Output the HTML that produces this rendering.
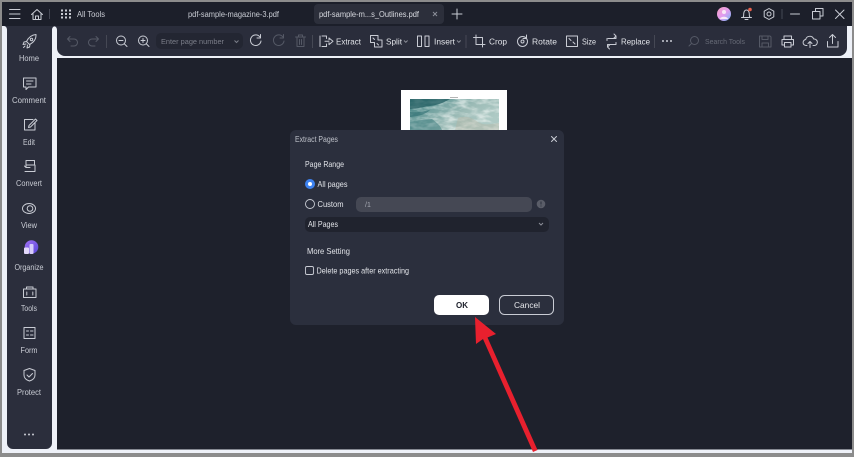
<!DOCTYPE html>
<html>
<head>
<meta charset="utf-8">
<style>
html,body{margin:0;padding:0;width:854px;height:457px;overflow:hidden;background:#8c8c8c}
svg{display:block;filter:blur(.35px)}
text{font-family:"Liberation Sans",sans-serif}
.s{fill:#c9ccd4;font-size:8px}
.t{fill:#d8dae0;font-size:8px}
.d{fill:#e2e4e9;font-size:8.300px}
.i{fill:none;stroke:#c9ccd4;stroke-width:1;stroke-linecap:round;stroke-linejoin:round}
.o{fill:none;stroke:#555966;stroke-width:1;stroke-linecap:round;stroke-linejoin:round}
</style>
</head>
<body>
<svg width="854" height="457" viewBox="0 0 854 457" xmlns="http://www.w3.org/2000/svg">
<defs>
<linearGradient id="sea" x1="0" y1="0" x2="1" y2="0.5">
<stop offset="0" stop-color="#3f8082"/><stop offset="0.35" stop-color="#74a3a1"/><stop offset="0.65" stop-color="#9dbcb7"/><stop offset="1" stop-color="#aecac5"/>
</linearGradient>
<linearGradient id="ava" x1="0" y1="0" x2="1" y2="1">
<stop offset="0" stop-color="#f5a0c0"/><stop offset="0.5" stop-color="#e39cf0"/><stop offset="1" stop-color="#70b8f5"/>
</linearGradient>
<linearGradient id="org" x1="0" y1="0" x2="1" y2="1">
<stop offset="0" stop-color="#a070f5"/><stop offset="1" stop-color="#5a48d8"/>
</linearGradient>
<filter id="foam" x="0" y="0" width="100%" height="100%">
<feTurbulence type="fractalNoise" baseFrequency=".09 .22" numOctaves="3" seed="7"/>
<feColorMatrix type="matrix" values="0 0 0 0 .9  0 0 0 0 .94  0 0 0 0 .92  2.600 0 0 0 -1"/>
</filter>
</defs>
<rect width="854" height="457" fill="#8c8c8c"/>
<rect x="2" y="2" width="850" height="451" fill="#eef1f8"/>
<rect x="2" y="2" width="850" height="24" fill="#1c1f2a"/>

<!-- title bar -->
<g class="i">
<path d="M9.500 9.500h10.500M9.500 14h10.500M9.500 18.500h10.500"/>
<path d="M31.500 14.500l5.500-5 5.500 5M33 13.500v6h8v-6M35.500 19.500v-3.500h3v3.500"/>
</g>
<path d="M49.500 9v10" stroke="#454854"/>
<g fill="#c9ccd4">
<rect x="61" y="9.500" width="2" height="2"/><rect x="65" y="9.500" width="2" height="2"/><rect x="69" y="9.500" width="2" height="2"/>
<rect x="61" y="13" width="2" height="2"/><rect x="65" y="13" width="2" height="2"/><rect x="69" y="13" width="2" height="2"/>
<rect x="61" y="16.500" width="2" height="2"/><rect x="65" y="16.500" width="2" height="2"/><rect x="69" y="16.500" width="2" height="2"/>
</g>
<text x="77" y="17" class="s" textLength="28" lengthAdjust="spacingAndGlyphs">All Tools</text>
<text x="188" y="17" class="s" textLength="91" lengthAdjust="spacingAndGlyphs">pdf-sample-magazine-3.pdf</text>
<rect x="314" y="4" width="130" height="20" rx="4" fill="#2c2f3b"/>
<text x="319" y="17" class="t" textLength="100" lengthAdjust="spacingAndGlyphs">pdf-sample-m...s_Outlines.pdf</text>
<path d="M433 12l4 4M437 12l-4 4" fill="none" stroke="#8b8e98"/>
<path d="M452 14h10M457 9v10" class="i"/>
<circle cx="724" cy="14" r="7" fill="url(#ava)"/>
<circle cx="724" cy="12" r="2" fill="#f8e8f8"/>
<path d="M720 19c.5-3 7.500-3 8 0" fill="#f8e8f8"/>
<path d="M741.500 17.500h10M743 17.500c1-1 .5-3 .8-4.500.4-2 1.500-3 2.700-3s2.300 1 2.700 3c.3 1.500-.2 3.500.8 4.500M745 19.500h3" class="i"/>
<circle cx="750" cy="9.500" r="1.800" fill="#e8604c"/>
<path d="M769 8.500l4.800 2.700v5.600l-4.800 2.700-4.800-2.700v-5.600z" class="i"/>
<circle cx="769" cy="14" r="2" class="i"/>
<path d="M782 9v10" stroke="#454854"/>
<path d="M790.500 14h9" class="i"/>
<path d="M812.500 11.500h7.500v7.500h-7.500zM815.500 11.500v-3h7.500v7.500h-3" class="i"/>
<path d="M835.500 10l8.500 8.500M844 10l-8.500 8.500" class="i"/>

<!-- sidebar -->
<path d="M4 26h52c-3 0-4 2-4 4v413a6 6 0 0 1-6 6h-33a6 6 0 0 1-6-6v-413c0-2-1-4-3-4z" fill="#2b2e3c"/>
<rect x="57" y="58" width="795" height="391.500" fill="#1e212c"/>
<!-- toolbar -->
<path d="M53 26h794v22a8 8 0 0 1-8 8h-774a8 8 0 0 1-8-8v-18c0-2-1-4-4-4z" fill="#2a2d3b"/>

<!-- sidebar icons -->
<g class="i">
<path d="M36 34.500c-4 .3-7.500 3-9.500 7l3 3c4-2 6.700-5.500 6.500-10zM26.500 41.500l-2.500.5-1 2.500 3-.5M30 44.500l-.5 2.500-2.500 1 .5-3M25 46l-1.500 1.500"/>
<circle cx="31.500" cy="39.500" r="1.200"/>
<path d="M23.500 78h12.500v9h-7.500l-2.500 2.500v-2.500h-2.500zM26.500 81h6.500M26.500 84h4.500"/>
<path d="M33 119.500h-8.500v10.500h10.500v-7M29 125.500l6.500-6.500 1.500 1.500-6.500 6.500-2 .5z"/>
<path d="M26 160.500h8.500v4.500h-8.500zM26 165v2.500l-1.500-1.500M26 167.500h4M29 171.500h6v-6.500M25 171.500h4"/>
<ellipse cx="29" cy="208.500" rx="6.500" ry="5"/>
<circle cx="30" cy="208.500" r="2.800"/>
<path d="M23.500 289h12.500v8.500h-12.500zM26.500 289v-2h6.500v2M26.800 292v3M32.800 292v3"/>
<path d="M24 327.500h11v11h-11zM26.500 331h2M30.500 331h2.500M26.500 335h2M30.500 335h2.500"/>
<path d="M29.500 368.500l5.500 2v4.500c0 3-2.300 5-5.500 6-3.200-1-5.500-3-5.500-6v-4.500zM27 375l2 2 3.500-3.500"/>
</g>
<circle cx="31.500" cy="247" r="6.800" fill="url(#org)"/>
<rect x="24" y="247.500" width="5" height="6.500" rx="1" fill="#e3d9fb"/>
<rect x="29.500" y="244" width="4" height="10" rx="1" fill="#d6ccfa"/>
<g fill="#c9ccd4"><circle cx="25" cy="434.500" r="1"/><circle cx="29" cy="434.500" r="1"/><circle cx="33" cy="434.500" r="1"/></g>
<g text-anchor="middle" class="s">
<text x="29" y="61" textLength="20" lengthAdjust="spacingAndGlyphs">Home</text>
<text x="29" y="103" textLength="34" lengthAdjust="spacingAndGlyphs">Comment</text>
<text x="29" y="145" textLength="12" lengthAdjust="spacingAndGlyphs">Edit</text>
<text x="29" y="186" textLength="26" lengthAdjust="spacingAndGlyphs">Convert</text>
<text x="29" y="228" textLength="16" lengthAdjust="spacingAndGlyphs">View</text>
<text x="29" y="270" textLength="29" lengthAdjust="spacingAndGlyphs">Organize</text>
<text x="29" y="311" textLength="16" lengthAdjust="spacingAndGlyphs">Tools</text>
<text x="29" y="353" textLength="17" lengthAdjust="spacingAndGlyphs">Form</text>
<text x="29" y="395" textLength="24" lengthAdjust="spacingAndGlyphs">Protect</text>
</g>

<!-- toolbar icons -->
<g class="o">
<path d="M67.500 39l2.500-2.500M67.500 39l2.500 2.500M67.500 39h6.500a3.500 3.500 0 0 1 0 7h-3"/>
<path d="M98.500 39l-2.500-2.500M98.500 39l-2.500 2.500M98.500 39h-6.500a3.500 3.500 0 0 0 0 7h3"/>
</g>
<path d="M106.500 35v13" stroke="#454854"/>
<g class="i">
<circle cx="121" cy="40.500" r="4.500"/><path d="M119 40.500h4M124.500 44l2.500 2.500"/>
<circle cx="143" cy="40.500" r="4.500"/><path d="M141 40.500h4M143 38.500v4M146.500 44l2.500 2.500"/>
</g>
<rect x="156" y="33" width="87" height="16" rx="5" fill="#232632"/>
<text x="161" y="44" fill="#7b7e89" style="font-size:7px" textLength="63" lengthAdjust="spacingAndGlyphs">Enter page number</text>
<path d="M234.500 40.500l2 2 2-2" fill="none" stroke="#7b7e89"/>
<path d="M260 37a5.300 5.300 0 1 0 1 4M260.500 34.500v3.500h-3.500" class="i" stroke-width="1.300"/>
<g class="o">
<path d="M283 37a5.300 5.300 0 1 0 1 4M283.500 34.500v3.500h-3.500"/>
<path d="M295.500 37h10M297 37v9.500h7v-9.500M298.500 37v-2h4v2M299.500 39.500v5M301.500 39.500v5"/>
</g>
<path d="M312.500 35v13" stroke="#454854"/>
<g class="i">
<path d="M320 36v10.500M322 36h4.500v2.500M322 46.500h4.500v-2.500M325 41.300h4M329 38l4 3.300-4 3.300v-1.800M329 38v1.800"/>
<path d="M370.500 35.500h7.500v4.500h4v7h-7.500v-4.500h-4zM373 38l1.500 1.500M377 43.500l1.500 1.500"/>
<path d="M417.500 36h4v10.500h-4zM425 36h4v10.500h-4z"/>
<path d="M476 35v9.500h9M473.500 37.500h9v9.500"/>
<circle cx="522.500" cy="41.500" r="5"/><path d="M526.500 35v3.500h-3.500"/><circle cx="522.500" cy="41.500" r="1.500"/>
<path d="M566.500 36h11v10.500h-11zM569 38.500l2 2M575 44l-2-2"/>
<path d="M608 38.500h8v-2.500M614 34l2 2-2 2M615.500 44.500h-8v2.500M609.500 49l-2-2 2-2M607 38.500v2M616 44.500v-2"/>
</g>
<g class="d">
<text x="336" y="44.500" textLength="25" lengthAdjust="spacingAndGlyphs">Extract</text>
<text x="386" y="44.500" textLength="16" lengthAdjust="spacingAndGlyphs">Split</text>
<text x="434" y="44.500" textLength="21" lengthAdjust="spacingAndGlyphs">Insert</text>
<text x="489" y="44.500" textLength="18" lengthAdjust="spacingAndGlyphs">Crop</text>
<text x="532" y="44.500" textLength="25" lengthAdjust="spacingAndGlyphs">Rotate</text>
<text x="582" y="44.500" textLength="14" lengthAdjust="spacingAndGlyphs">Size</text>
<text x="621" y="44.500" textLength="29" lengthAdjust="spacingAndGlyphs">Replace</text>
</g>
<path d="M404 40.500l1.800 1.800 1.800-1.800M457 40.500l1.800 1.800 1.800-1.800" fill="none" stroke="#8b8e98"/>
<path d="M466 35v13M654.500 35v13" stroke="#454854"/>
<g fill="#c9ccd4"><circle cx="663" cy="41" r="1"/><circle cx="667" cy="41" r="1"/><circle cx="671" cy="41" r="1"/></g>
<g class="o"><circle cx="694.500" cy="40.500" r="4"/><path d="M691.500 43.500l-2.500 2.500"/></g>
<text x="705" y="44" fill="#666a76" style="font-size:7px" textLength="40" lengthAdjust="spacingAndGlyphs">Search Tools</text>
<g class="o"><path d="M759.500 36h10.500l1 1v10h-11.500zM762 36v3.500h6v-3.500M762 47v-4h6.500v4"/></g>
<g class="i">
<path d="M784 39.500v-3.500h7.500v3.500M782 39.500h11.500v5.500h-2.500M782 39.500v5.500h2.500M784.500 42.500h6.500v4.500h-6.500z"/>
<path d="M807 45.500h-.5a3 3 0 0 1-.8-6 4.200 4.200 0 0 1 8-.5 3.200 3.200 0 0 1 .8 6.500h-1.500M810 47.500v-6M808 43.500l2-2 2 2"/>
<path d="M832.500 43.500v-8.500M829.500 37.500l3-3 3 3M827.500 41.500v5.500h10.500v-5.500"/>
</g>

<!-- pdf page -->
<rect x="401" y="90" width="106" height="40" fill="#ffffff"/>
<rect x="410" y="99" width="89" height="31" fill="url(#sea)"/>
<rect x="410" y="99" width="89" height="31" filter="url(#foam)" opacity=".6"/>
<path d="M410 99h40c-7 4-12 6-20 7s-14 3-20 3z" fill="#256064" opacity=".8"/>
<path d="M410 112c8 1 14-1 20-2-3 3-8 6-20 7z" fill="#2c6c70" opacity=".6"/>
<path d="M410 122c8-1 14-3 22-3 4 3 8 6 10 11h-32z" fill="#3a7a7c" opacity=".5"/>
<path d="M458 118c8-3 14 0 20 4s13 2 21 1v7h-44z" fill="#b7b39f" opacity=".35"/>
<rect x="450" y="97" width="8" height="1" fill="#b5b5b5"/>

<!-- dialog -->
<rect x="290" y="130" width="274" height="195" rx="6" fill="#2b2f3d"/>
<text x="295" y="142" fill="#bfc2ca" style="font-size:8px" textLength="43" lengthAdjust="spacingAndGlyphs">Extract Pages</text>
<path d="M551.500 136.500l5 5M556.500 136.500l-5 5" class="i"/>
<text x="305" y="167" class="d" textLength="39" lengthAdjust="spacingAndGlyphs">Page Range</text>
<circle cx="310" cy="184" r="5" fill="#3d82f0"/>
<circle cx="310" cy="184" r="2" fill="#ffffff"/>
<text x="317.500" y="187" class="d" textLength="30" lengthAdjust="spacingAndGlyphs">All pages</text>
<circle cx="310" cy="204" r="4.500" fill="none" stroke="#c9ccd4" stroke-width=".9"/>
<text x="317.500" y="207" class="d" textLength="26" lengthAdjust="spacingAndGlyphs">Custom</text>
<rect x="356" y="197" width="176" height="15" rx="5" fill="#454854"/>
<text x="365" y="207" fill="#a6a9b2" style="font-size:7px">/1</text>
<circle cx="541" cy="204" r="4.300" fill="#5a5d68"/>
<rect x="540.500" y="201.500" width="1" height="3" fill="#2b2f3d"/><rect x="540.500" y="205.500" width="1" height="1" fill="#2b2f3d"/>
<rect x="305" y="217" width="244" height="15" rx="5" fill="#20232e"/>
<text x="308" y="227" class="d" textLength="30" lengthAdjust="spacingAndGlyphs">All Pages</text>
<path d="M539 223l2 2 2-2" fill="none" stroke="#8b8e98"/>
<text x="307" y="254" class="d" textLength="43" lengthAdjust="spacingAndGlyphs">More Setting</text>
<rect x="305.500" y="266.500" width="8" height="8" rx="1.500" fill="none" stroke="#c9ccd4" stroke-width=".9"/>
<text x="316.500" y="273.500" class="d" textLength="92.500" lengthAdjust="spacingAndGlyphs">Delete pages after extracting</text>
<rect x="434" y="295" width="55" height="20" rx="5" fill="#ffffff"/>
<text x="456" y="308" fill="#1c1f2a" font-weight="bold" style="font-size:8.500px" textLength="12" lengthAdjust="spacingAndGlyphs">OK</text>
<rect x="499.500" y="295.500" width="54" height="19" rx="5" fill="none" stroke="#c9ccd4"/>
<text x="514" y="308" fill="#e6e7eb" style="font-size:8.500px" textLength="26" lengthAdjust="spacingAndGlyphs">Cancel</text>

<!-- arrow -->
<path d="M475 317l21 17-8.500 3.500 50 112.500-4.500 2-50-113-7 5z" fill="#e8202e"/>
</svg>
</body>
</html>
